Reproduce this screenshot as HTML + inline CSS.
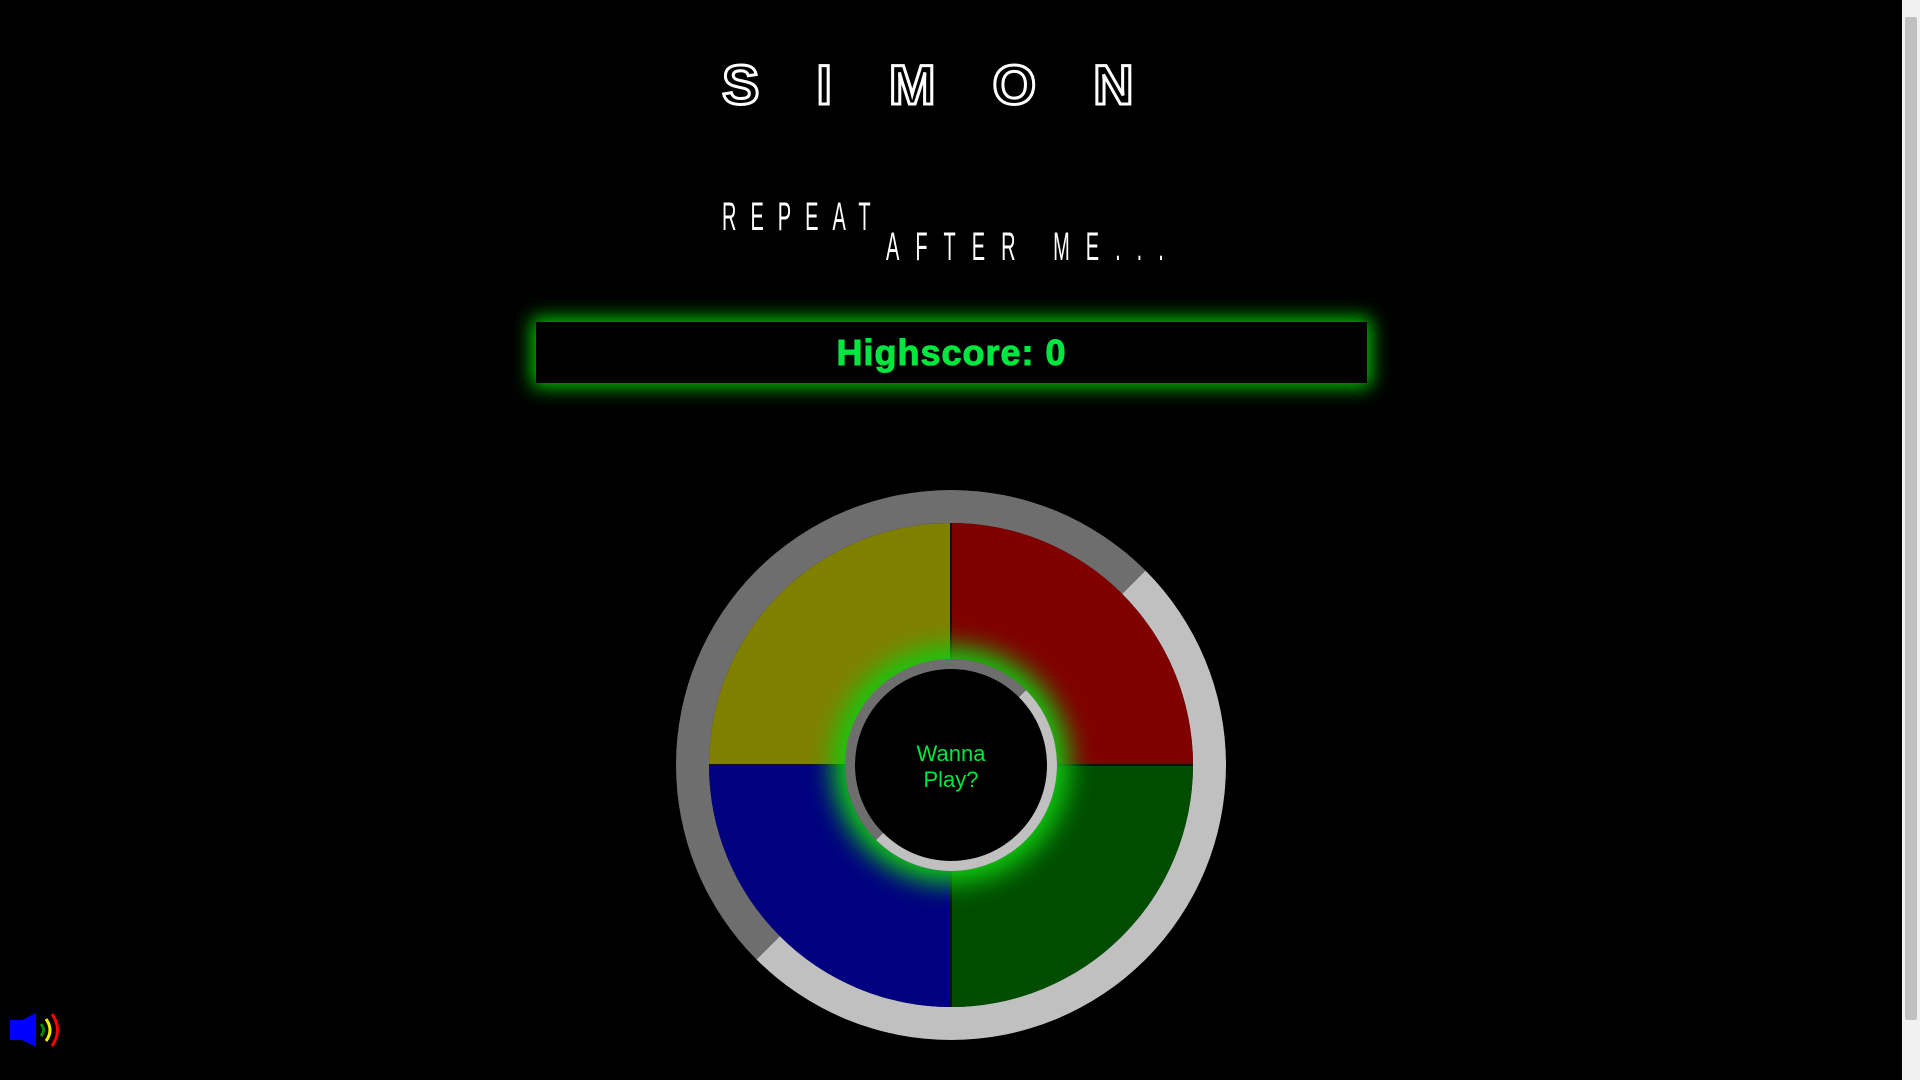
<!DOCTYPE html>
<html><head><meta charset="utf-8"><style>
html,body{margin:0;padding:0;background:#000;width:1920px;height:1080px;overflow:hidden;font-family:"Liberation Sans",sans-serif}
.sb{position:absolute;right:0;top:0;width:18px;height:1080px;background:#f1f1f1}
.sb i{position:absolute;left:3px;top:17px;width:12px;height:1003px;background:#c1c1c1;border-radius:2px}
.title{position:absolute;left:722px;top:52px;font:bold 56px "Liberation Sans",sans-serif;color:#000;-webkit-text-stroke:3px #fff;letter-spacing:57px;white-space:nowrap}
.sub{position:absolute;color:#fff;font:40px "Liberation Sans Narrow","Liberation Sans",sans-serif;transform:scaleX(.5);transform-origin:left;white-space:nowrap}
.hs{position:absolute;left:536px;top:322px;width:831px;height:61px;background:#000;box-shadow:0 0 18px 4px #0c0;text-align:center;color:#00e640;font:bold 36px/61px "Liberation Sans",sans-serif;letter-spacing:1px;-webkit-text-stroke:1px #00e640}
.ring{position:absolute;left:676px;top:490px;width:550px;height:550px;border-radius:50%;background:conic-gradient(from 45deg,#c0c0c0 0 180deg,#6e6e6e 180deg 360deg)}
.quads{position:absolute;left:709px;top:523px;width:484px;height:484px;border-radius:50%;overflow:hidden;background:#111}
.q{position:absolute;width:241px;height:241px}
.c1{position:absolute;left:845px;top:659px;width:212px;height:212px;border-radius:50%;background:conic-gradient(from 45deg,#c0c0c0 0 180deg,#6e6e6e 180deg 360deg);box-shadow:0 0 26px 12px #1c1}
.c2{position:absolute;left:855px;top:669px;width:192px;height:192px;border-radius:50%;background:#000;color:#00e640;text-align:center;font:22px/26px "Liberation Sans",sans-serif}
</style></head><body>
<div class="title">SIMON</div>
<div class="sub" style="left:722px;top:195px;letter-spacing:28px">REPEAT</div>
<div class="sub" style="left:886px;top:225px;letter-spacing:32px;font-size:40px">AFTER ME...</div>
<div class="hs">Highscore: 0</div>
<div class="ring"></div>
<div class="quads">
<div class="q" style="left:0;top:0;background:#808000"></div>
<div class="q" style="left:243px;top:0;background:#800000"></div>
<div class="q" style="left:0;top:243px;background:#000080"></div>
<div class="q" style="left:243px;top:243px;background:#004d00"></div>
</div>
<div class="c1"></div>
<div class="c2"><div style="padding-top:72px">Wanna<br>Play?</div></div>
<svg style="position:absolute;left:8px;top:1010px" width="54" height="40" viewBox="0 0 54 40">
<path d="M2 10h12l14-7v34l-14-7h-12z" fill="#00f"/>
<path d="M33 14q5 6 0 12" stroke="#080" stroke-width="3" fill="none"/>
<path d="M38 9q8 11 0 22" stroke="#ee0" stroke-width="3" fill="none"/>
<path d="M44 4q11 16 0 32" stroke="#f00" stroke-width="3" fill="none"/>
</svg>
<div class="sb"><i></i></div>
</body></html>
